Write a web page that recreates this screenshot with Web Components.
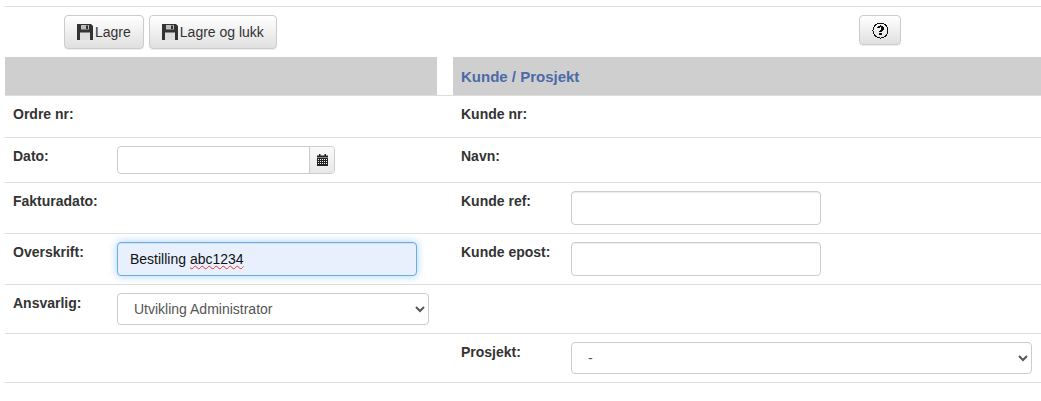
<!DOCTYPE html>
<html lang="no">
<head>
<meta charset="utf-8">
<title>Ordre</title>
<style>
  body { margin: 0; background: #fff; font-family: "Liberation Sans", Arial, sans-serif; font-size: 14px; color: #333; }
</style>
</head>
<body>
<order-form>
  <tool-bar>
    <tool-button slot="left" icon="save">Lagre</tool-button>
    <tool-button slot="left" icon="save">Lagre og lukk</tool-button>
    <tool-button slot="help" icon="help"></tool-button>
  </tool-bar>
  <section-head>Kunde / Prosjekt</section-head>

  <form-row style="--row-height:42px">
    <form-field slot="left" label="Ordre nr:"></form-field>
    <form-field slot="right" label="Kunde nr:"></form-field>
  </form-row>
  <form-row>
    <form-field slot="left" label="Dato:"><date-input></date-input></form-field>
    <form-field slot="right" label="Navn:"></form-field>
  </form-row>
  <form-row>
    <form-field slot="left" label="Fakturadato:"></form-field>
    <form-field slot="right" label="Kunde ref:"><text-input style="width:250px"></text-input></form-field>
  </form-row>
  <form-row>
    <form-field slot="left" label="Overskrift:"><text-input focused spell="abc1234" style="width:300px">Bestilling </text-input></form-field>
    <form-field slot="right" label="Kunde epost:"><text-input style="width:250px"></text-input></form-field>
  </form-row>
  <form-row>
    <form-field slot="left" label="Ansvarlig:"><select-input value="Utvikling Administrator" style="width:312px"></select-input></form-field>
  </form-row>
  <form-row>
    <form-field slot="right" label="Prosjekt:"><select-input value="-" style="width:461px"></select-input></form-field>
  </form-row>
</order-form>

<script>
const ICONS = {
  save: `<svg width="16" height="16" viewBox="0 0 16 16"><path fill="#333" d="M0 0h14l2 2v14H0z"/><path fill="#bdbdbd" d="M4 1h8v4.500H4z"/><path fill="#333" d="M9 1.500h2v3.500H9z"/><path fill="#dedede" d="M3 8.500h10V16H3z"/></svg>`,
  help: `<svg width="17" height="17" viewBox="0 0 17 17" shape-rendering="crispEdges"><circle cx="8.500" cy="8.500" r="7.500" fill="none" stroke="#111" stroke-width="1"/><path d="M5 6.300C5 4.300 6.600 3.300 8.600 3.300c2.100 0 3.500 1 3.500 2.800 0 1.400-.9 2-1.700 2.600-.6.400-.9.700-.9 1.400H7.300c0-1.300.5-1.900 1.200-2.400.6-.5 1-.8 1-1.400 0-.6-.4-.9-.9-.9-.7 0-1 .4-1 1.100z" fill="#111"/><rect x="7" y="11" width="3" height="2" fill="#111"/></svg>`,
  calendar: `<svg width="11" height="12" viewBox="0 0 11 12"><path fill="#222" d="M2 0h1.500v1.500H7.500V0H9v1.500h2V3H0V1.500h2z"/><path fill="#222" fill-rule="evenodd" d="M0 3.500h11V12H0z M1 5v1h1V5z M3 5v1h1V5z M5 5v1h1V5z M7 5v1h1V5z M9 5v1h1V5z M1 7v1h1V7z M3 7v1h1V7z M5 7v1h1V7z M7 7v1h1V7z M9 7v1h1V7z M1 9v1h1V9z M3 9v1h1V9z M5 9v1h1V9z M7 9v1h1V9z M9 9v1h1V9z"/></svg>`
};

function define(name, html, setup) {
  customElements.define(name, class extends HTMLElement {
    constructor() {
      super();
      this.attachShadow({ mode: "open" }).innerHTML = html;
    }
    connectedCallback() {
      if (setup) setup(this, this.shadowRoot);
    }
  });
}

define("order-form", `
  <style>
    :host { display: block; padding: 6px 0 0 5px; }
  </style>
  <slot></slot>`);

define("tool-bar", `
  <style>
    :host { display: flex; box-sizing: border-box; height: 51px; border-top: 1px solid #ddd; padding: 8px 0 0 59px; justify-content: flex-start; }
    .left { display: flex; gap: 5px; width: 795px; align-items: flex-start; }
    .help { display: block; }
  </style>
  <div class="left"><slot name="left"></slot></div>
  <div class="help"><slot name="help"></slot></div>`);

define("tool-button", `
  <style>
    :host { display: inline-flex; align-items: center; gap: 2px; box-sizing: border-box; height: 34px; padding: 0 12px; border: 1px solid #ccc; border-radius: 4px;
      background: linear-gradient(to bottom, #fff 0, #e0e0e0 100%); box-shadow: 0 1px 1px rgba(0,0,0,.075); color: #333; }
    :host([icon="help"]) { height: 30px; width: 42px; justify-content: center; padding: 0; }
    span { display: flex; }
  </style>
  <span id="i"></span><slot></slot>`,
  (el, root) => { root.getElementById("i").innerHTML = ICONS[el.getAttribute("icon")]; });

define("section-head", `
  <style>
    :host { display: flex; box-sizing: border-box; height: 39px; background: #cfcfcf; border-bottom: 1px solid #ddd; }
    .gap { width: 16px; margin-left: 432px; background: #fff; }
    .title { padding-left: 8px; line-height: 40px; font-size: 15px; font-weight: bold; color: #4a6aa8; }
  </style>
  <div class="gap"></div>
  <div class="title"><slot></slot></div>`);

define("form-row", `
  <style>
    :host { display: grid; grid-template-columns: 448px 1fr; box-sizing: border-box; min-height: var(--row-height, 0); border-bottom: 1px solid #ddd; }
    .r { --label-width: 110px; }
    .l { --label-width: 104px; }
  </style>
  <div class="l"><slot name="left"></slot></div>
  <div class="r"><slot name="right"></slot></div>`);

define("form-field", `
  <style>
    :host { display: flex; padding: 8px; align-items: flex-start; }
    .label { flex: none; width: var(--label-width); font-weight: bold; line-height: 20px; color: #333; }
  </style>
  <div class="label" id="l"></div>
  <slot></slot>`,
  (el, root) => { root.getElementById("l").textContent = el.getAttribute("label"); });

define("date-input", `
  <style>
    :host { display: flex; height: 28px; width: 218px; box-sizing: border-box; border: 1px solid #ccc; border-radius: 4px; background: #fff; }
    .field { flex: 1; }
    .addon { box-sizing: border-box; width: 25px; display: flex; align-items: center; justify-content: center; border-left: 1px solid #ccc; border-radius: 0 3px 3px 0;
      background: linear-gradient(to bottom, #fafafa, #e8e8e8); }
  </style>
  <div class="field"></div>
  <div class="addon" id="a"></div>`,
  (el, root) => { root.getElementById("a").innerHTML = ICONS.calendar; });

define("text-input", `
  <style>
    :host { display: block; box-sizing: border-box; height: 34px; border: 1px solid #ccc; border-radius: 4px; background: #fff; padding: 0 12px; line-height: 32px; color: #111; box-shadow: inset 0 1px 1px rgba(0,0,0,.075); }
    :host([focused]) { border-color: #66afe9; background: #e8f0fe; box-shadow: inset 0 1px 1px rgba(0,0,0,.075), 0 0 8px rgba(102,175,233,.6); }
    .v { white-space: pre; }
    #s { text-decoration: underline wavy #e33; text-decoration-thickness: 1px; text-underline-offset: 1px; }
  </style>
  <span class="v"><slot></slot><span id="s"></span></span>`,
  (el, root) => { root.getElementById("s").textContent = el.getAttribute("spell") || ""; });

define("select-input", `
  <style>
    :host { display: block; }
    select { display: block; width: 100%; height: 32px; box-sizing: border-box; border: 1px solid #ccc; border-radius: 4px; background: #fff; padding: 0 12px; font: 14px "Liberation Sans", Arial, sans-serif; color: #555; outline: none; }
  </style>
  <select id="s"><option></option></select>`,
  (el, root) => { root.querySelector("option").textContent = el.getAttribute("value"); });
</script>
</body>
</html>
